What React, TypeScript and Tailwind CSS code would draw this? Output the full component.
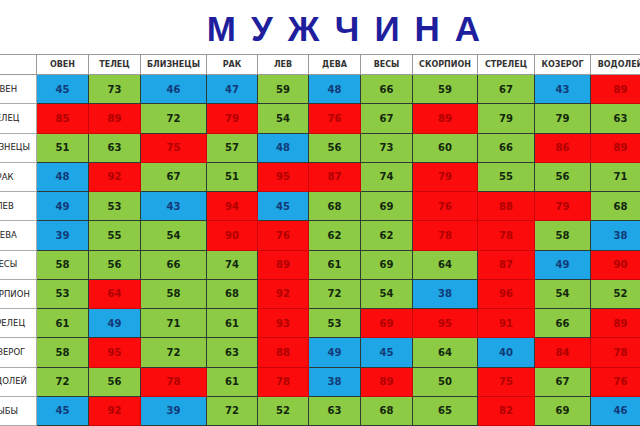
import { Fragment } from "react";

const signs = ["ОВЕН", "ТЕЛЕЦ", "БЛИЗНЕЦЫ", "РАК", "ЛЕВ", "ДЕВА", "ВЕСЫ", "СКОРПИОН", "СТРЕЛЕЦ", "КОЗЕРОГ", "ВОДОЛЕЙ", "РЫБЫ"];

// b = blue, g = green, r = red
const rows = [
  "45b 73g 46b 47b 59g 48b 66g 59g 67g 43b 89r",
  "85r 89r 72g 79r 54g 76r 67g 89r 79g 79g 63g",
  "51g 63g 75r 57g 48b 56g 73g 60g 66g 86r 89r",
  "48b 92r 67g 51g 95r 87r 74g 79r 55g 56g 71g",
  "49b 53g 43b 94r 45b 68g 69g 76r 88r 79r 68g",
  "39b 55g 54g 90r 76r 62g 62g 78r 78r 58g 38b",
  "58g 56g 66g 74g 89r 61g 69g 64g 87r 49b 90r",
  "53g 64r 58g 68g 92r 72g 54g 38b 96r 54g 52g",
  "61g 49b 71g 61g 93r 53g 69r 95r 91r 66g 89r",
  "58g 95r 72g 63g 88r 49b 45b 64g 40b 84r 78r",
  "72g 56g 78r 61g 78r 38b 89r 50g 75r 67g 76r",
  "45b 92r 39b 72g 52g 63g 68g 65g 82r 69g 46b",
];

const cellStyle: Record<string, string> = {
  b: "bg-[#1fa6e6] text-[#123a78] border-[#2c3c34]",
  g: "bg-[#8dcb45] text-[#12280c] border-[#2c3c34]",
  r: "bg-[#fb0b0b] text-[#b00000] border-[#cc0606]",
};

export default function App() {
  return (
    <div className="w-[640px] h-[426px] overflow-hidden bg-white font-['DejaVu_Sans',sans-serif]">
      {/* Title */}
      <div className="h-[54px] flex items-center justify-center pl-[62px]">
        <h1 className="text-[35px] font-bold text-[#1f1f9e] tracking-[15px] leading-none font-['Liberation_Sans',sans-serif] mt-[3px]">
          МУЖЧИНА
        </h1>
      </div>

      {/* Table */}
      <div className="grid grid-cols-[37px_52px_52px_66px_51px_51px_52px_52px_65px_57px_56px_60px] grid-rows-[21px_repeat(12,29.25px)]">
        <div className="bg-white border-t border-r border-b border-[#9a9a9a]" />
        {signs.slice(0, 11).map((s) => (
          <div
            key={s}
            className="bg-white border-t border-r border-b border-[#9a9a9a] flex items-center justify-center overflow-hidden text-[8px] font-bold text-[#333] whitespace-nowrap"
          >
            {s}
          </div>
        ))}

        {rows.map((row, i) => (
          <Fragment key={i}>
            <div className="bg-white border-r border-b border-[#aaaaaa] overflow-hidden flex items-center">
              <div className="w-[100px] ml-[-45px] shrink-0 text-center text-[8.5px] text-[#222] whitespace-nowrap">
                {signs[i]}
              </div>
            </div>
            {row.split(" ").map((c, j) => {
              const kind = c.slice(-1);
              return (
                <div
                  key={j}
                  className={
                    "border-r border-b flex items-center justify-center text-[10px] font-bold " +
                    cellStyle[kind]
                  }
                >
                  {c.slice(0, -1)}
                </div>
              );
            })}
          </Fragment>
        ))}
      </div>
    </div>
  );
}
